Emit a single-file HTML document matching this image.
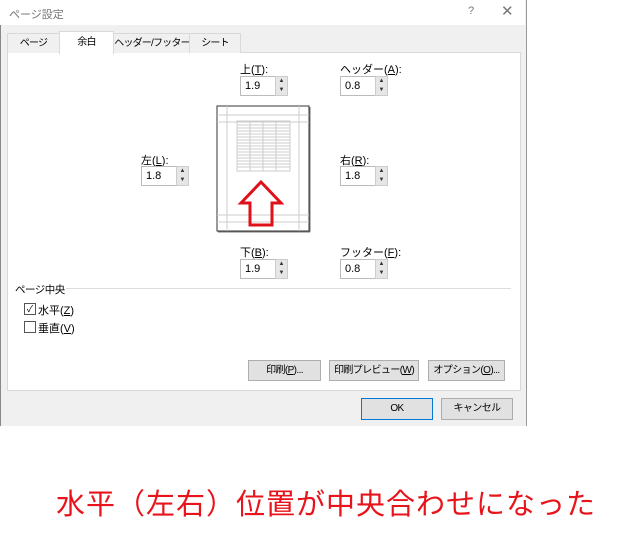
<!DOCTYPE html>
<html><head><meta charset="utf-8"><style>
body{margin:0;width:640px;height:543px;background:#fff;position:relative;overflow:hidden;font-family:"Liberation Sans","Noto Sans CJK JP",sans-serif;font-size:11px;color:#000}
.a{position:absolute;white-space:nowrap}
.dlg{left:0;top:0;width:525px;height:426px;background:#f0f0f0;border-right:1px solid #999;border-left:1px solid #888}
.title{left:0;top:0;width:525px;height:25px;background:#fff;color:#777;font-size:11px}
.panel{left:7px;top:52px;width:512px;height:337px;background:#fff;border:1px solid #d9d9d9}
.tab{top:33px;height:19px;border:1px solid #d9d9d9;border-bottom:none;background:#f0f0f0;text-align:center;line-height:19px;font-size:10px;letter-spacing:-0.8px;overflow:hidden}
.lbl{font-size:11px}
.box{width:34px;height:18px;border:1px solid #bbb;background:#fff;line-height:18px;padding-left:4px;font-size:11px}
.sp{width:13px;height:20px;background:#e6e6e6;border:1px solid #ccc;box-sizing:border-box;font-size:6px;text-align:center;line-height:9px;color:#333}
.btn{height:21px;background:#e1e1e1;border:1px solid #adadad;box-sizing:border-box;text-align:center;line-height:19px;font-size:10px;letter-spacing:-0.6px;overflow:hidden}
.cb{width:10px;height:10px;border:1px solid #555;background:#fff;font-size:9px;line-height:10px;text-align:center}
</style></head><body>
<div class="a dlg"></div>
<div class="a title"><span class="a" style="left:9px;top:6px">ページ設定</span><span class="a" style="left:468px;top:5px">?</span><span class="a" style="left:501px;top:2px;font-size:15px">✕</span></div>
<div class="a panel"></div>
<div class="a tab" style="left:7px;width:51px">ページ</div>
<div class="a tab" style="left:59px;top:31px;height:22px;width:53px;background:#fff;line-height:22px">余白</div>
<div class="a tab" style="left:113px;width:76px">ヘッダー/フッター</div>
<div class="a tab" style="left:189px;width:50px">シート</div>

<div class="a lbl" style="left:240px;top:61px">上(<u>T</u>):</div>
<div class="a box" style="left:240px;top:76px">1.9</div><div class="a sp" style="left:275px;top:76px">▲<br>▼</div>
<div class="a lbl" style="left:340px;top:61px">ヘッダー(<u>A</u>):</div>
<div class="a box" style="left:340px;top:76px">0.8</div><div class="a sp" style="left:375px;top:76px">▲<br>▼</div>
<div class="a lbl" style="left:141px;top:152px">左(<u>L</u>):</div>
<div class="a box" style="left:141px;top:166px">1.8</div><div class="a sp" style="left:176px;top:166px">▲<br>▼</div>
<div class="a lbl" style="left:340px;top:152px">右(<u>R</u>):</div>
<div class="a box" style="left:340px;top:166px">1.8</div><div class="a sp" style="left:375px;top:166px">▲<br>▼</div>
<div class="a lbl" style="left:240px;top:244px">下(<u>B</u>):</div>
<div class="a box" style="left:240px;top:259px">1.9</div><div class="a sp" style="left:275px;top:259px">▲<br>▼</div>
<div class="a lbl" style="left:340px;top:244px">フッター(<u>F</u>):</div>
<div class="a box" style="left:340px;top:259px">0.8</div><div class="a sp" style="left:375px;top:259px">▲<br>▼</div>

<svg class="a" style="left:216px;top:105px" width="96" height="130">
<rect x="1" y="1" width="92" height="125" fill="#fff" stroke="#333" stroke-width="1"/>
<line x1="2" y1="127" x2="94" y2="127" stroke="#777"/><line x1="94" y1="2" x2="94" y2="127" stroke="#777"/>
<g stroke="#ccc"><line x1="11" y1="1" x2="11" y2="126"/><line x1="83" y1="1" x2="83" y2="126"/><line x1="1" y1="10" x2="93" y2="10"/><line x1="1" y1="17" x2="93" y2="17"/><line x1="1" y1="110" x2="93" y2="110"/><line x1="1" y1="117" x2="93" y2="117"/></g>
<g stroke="#ccc"><rect x="21" y="16" width="53" height="50" fill="none"/>
<line x1="34" y1="16" x2="34" y2="66"/><line x1="47" y1="16" x2="47" y2="66"/><line x1="60" y1="16" x2="60" y2="66"/>
<path d="M21 20H74M21 23H74M21 26H74M21 29H74M21 32H74M21 35H74M21 38H74M21 41H74M21 44H74M21 47H74M21 50H74M21 53H74M21 56H74M21 59H74M21 62H74"/></g>
<path d="M45 77 L65 98 L56 98 L56 120 L34 120 L34 98 L25 98 Z" fill="none" stroke="#e0101a" stroke-width="3"/>
</svg>

<div class="a" style="left:15px;top:282px;font-size:10.5px;letter-spacing:-0.5px">ページ中央</div>
<div class="a" style="left:66px;top:288px;width:445px;height:1px;background:#ddd"></div>
<div class="a cb" style="left:24px;top:303px">✓</div><div class="a" style="left:38px;top:302px">水平(<u>Z</u>)</div>
<div class="a cb" style="left:24px;top:321px"></div><div class="a" style="left:38px;top:320px">垂直(<u>V</u>)</div>

<div class="a btn" style="left:248px;top:360px;width:73px">印刷(<u>P</u>)...</div>
<div class="a btn" style="left:329px;top:360px;width:90px">印刷プレビュー(<u>W</u>)</div>
<div class="a btn" style="left:428px;top:360px;width:77px">オプション(<u>O</u>)...</div>
<div class="a btn" style="left:361px;top:398px;width:72px;border:1px solid #0078d7;height:22px">OK</div>
<div class="a btn" style="left:441px;top:398px;width:72px;height:22px">キャンセル</div>

<div class="a" style="left:56px;top:481px;font-size:29px;letter-spacing:1px;color:#e8141c">水平（左右）位置が中央合わせになった</div>
</body></html>
